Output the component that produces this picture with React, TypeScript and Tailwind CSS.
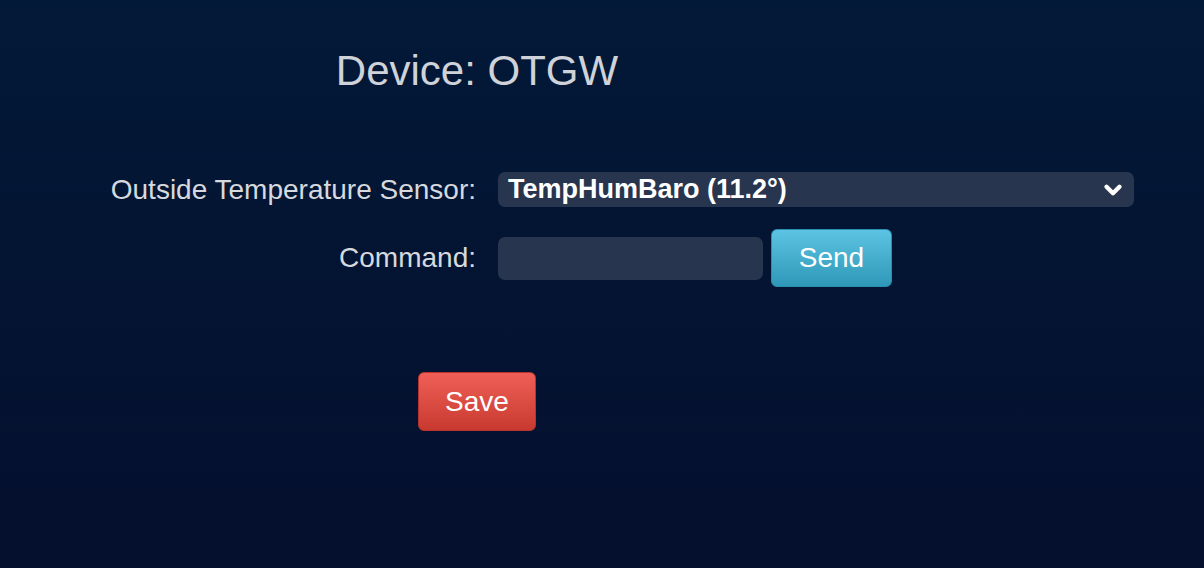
import { ChevronDown } from 'lucide-react';

const font = { fontFamily: '"Liberation Sans", Arial, sans-serif' };

export default function App() {
  return (
    <div
      className="min-h-[568px] w-full bg-gradient-to-b from-[#021937] to-[#050f2e] text-[#d6d9de]"
      style={font}
    >
      <div className="w-[954px] pt-[50px]">
        <h1 className="text-center text-[42px] leading-none font-normal text-[#cfd2d8]">
          Device: OTGW
        </h1>
      </div>

      <div className="mt-[80px] grid grid-cols-[498px_1fr] items-center gap-y-[22px] pr-[70px]">
        <label className="pr-[22px] text-right text-[28px] leading-none">
          Outside Temperature Sensor:
        </label>
        <div className="flex h-[35px] items-center justify-between rounded-[7px] bg-[#28354f] pr-[8px] pl-[10px]">
          <span className="text-[27px] leading-none font-bold text-white">TempHumBaro (11.2°)</span>
          <ChevronDown className="h-[26px] w-[26px] text-white" strokeWidth={4} />
        </div>

        <label className="pr-[22px] text-right text-[28px] leading-none">Command:</label>
        <div className="flex items-center gap-[8px]">
          <div className="h-[43px] w-[265px] rounded-[7px] bg-[#28354f]" />
          <button className="h-[58px] w-[121px] rounded-[6px] border border-[#2a8fae] bg-gradient-to-b from-[#5cc4e2] to-[#2f98b8] text-[28px] text-white">
            Send
          </button>
        </div>
      </div>

      <div className="mt-[85px] flex w-[954px] justify-center">
        <button className="h-[59px] w-[118px] rounded-[6px] border border-[#b8332c] bg-gradient-to-b from-[#ef5f57] to-[#c8392f] text-[28px] text-white">
          Save
        </button>
      </div>
    </div>
  );
}
